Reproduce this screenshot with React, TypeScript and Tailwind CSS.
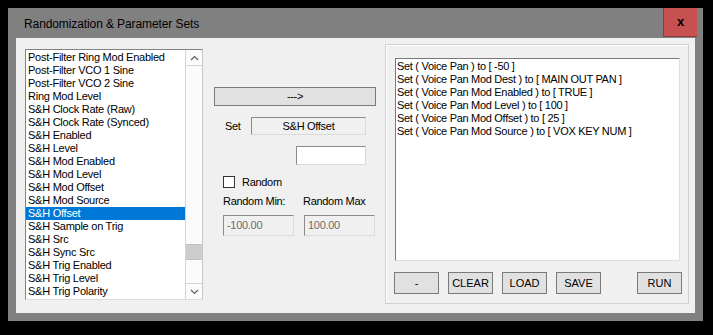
import React from 'react'

const params = [
  'Post-Filter Ring Mod Enabled',
  'Post-Filter VCO 1 Sine',
  'Post-Filter VCO 2 Sine',
  'Ring Mod Level',
  'S&H Clock Rate (Raw)',
  'S&H Clock Rate (Synced)',
  'S&H Enabled',
  'S&H Level',
  'S&H Mod Enabled',
  'S&H Mod Level',
  'S&H Mod Offset',
  'S&H Mod Source',
  'S&H Offset',
  'S&H Sample on Trig',
  'S&H Src',
  'S&H Sync Src',
  'S&H Trig Enabled',
  'S&H Trig Level',
  'S&H Trig Polarity',
]

const actions = [
  'Set ( Voice Pan ) to [ -50 ]',
  'Set ( Voice Pan Mod Dest ) to [ MAIN OUT PAN ]',
  'Set ( Voice Pan Mod Enabled ) to [ TRUE ]',
  'Set ( Voice Pan Mod Level ) to [ 100 ]',
  'Set ( Voice Pan Mod Offset ) to [ 25 ]',
  'Set ( Voice Pan Mod Source ) to [ VOX KEY NUM ]',
]

function WinButton({ label, className = '' }: { label: string; className?: string }) {
  return (
    <button className={`h-[22px] w-[45px] border border-[#7a7a7a] bg-[#e1e1e1] text-[11px] text-black leading-none ${className}`}>
      {label}
    </button>
  )
}

function ScrollBar() {
  return (
    <div className="w-[17px] flex flex-col border-l border-[#d4d4d4] bg-[#fbfbfb]">
      <div className="h-[16px] border-b border-[#d4d4d4] flex items-center justify-center">
        <svg width="9" height="6" viewBox="0 0 9 6"><polyline points="1,5 4.5,1.5 8,5" fill="none" stroke="#606060" strokeWidth="1.2" /></svg>
      </div>
      <div className="flex-1">
        <div className="mt-[178px] h-[16px] bg-[#cdcdcd] border-y border-[#c0c0c0]" />
      </div>
      <div className="h-[16px] border-t border-[#d4d4d4] flex items-center justify-center">
        <svg width="9" height="6" viewBox="0 0 9 6"><polyline points="1,1 4.5,4.5 8,1" fill="none" stroke="#606060" strokeWidth="1.2" /></svg>
      </div>
    </div>
  )
}

export default function App() {
  const sunken = 'border border-t-[#8c8c8c] border-l-[#8c8c8c] border-b-[#dadada] border-r-[#dadada]'
  return (
    <div className="w-[713px] h-[335px] bg-black pt-2 pl-2 font-['Liberation_Sans',Arial,sans-serif] text-black">
      <div className="w-[695px] h-[313px] bg-[#808080] flex flex-col">
        {/* title bar */}
        <div className="h-[30px] flex items-start pl-4 pr-[6px]">
          <span className="mt-[7px] text-[12px] tracking-[-0.1px] text-black">Randomization &amp; Parameter Sets</span>
          <div className="ml-auto w-[34px] h-[29px] bg-[#c75050] border-l border-b border-[#8e3c3c] flex items-center justify-center">
            <span className="text-[13px] font-bold leading-none -mt-[2px]">x</span>
          </div>
        </div>

        {/* client area */}
        <div className="mx-2 h-[275px] bg-[#f0f0f0] flex items-start">
          {/* parameter list */}
          <div className="ml-[9px] mt-[11px] w-[178px] h-[251px] flex border border-t-[#828282] border-l-[#828282] border-b-[#dcdcdc] border-r-[#c8c8c8] bg-white">
            <div className="flex-1 pt-[1px] overflow-hidden">
              {params.map((p) => (
                <div key={p}
                  className={`h-[13px] pl-[2px] text-[11px] leading-[13px] tracking-[-0.25px] whitespace-nowrap ${p === 'S&H Offset' ? 'bg-[#0078d7] text-white' : ''}`}>
                  {p}
                </div>
              ))}
            </div>
            <ScrollBar />
          </div>

          {/* middle controls */}
          <div className="ml-[11px] mt-[49px] w-[162px] flex flex-col text-[11px] tracking-[-0.3px]">
            <button className="h-[19px] w-full border border-[#7a7a7a] bg-[#e1e1e1] text-[11px] leading-none">---&gt;</button>

            <div className="mt-[11px] flex items-center pl-[11px]">
              <span className="w-[26px]">Set</span>
              <div className={`w-[115px] h-[18px] bg-[#f0f0f0] flex items-center justify-center ${sunken}`}>S&amp;H Offset</div>
            </div>

            <div className={`mt-[11px] ml-[82px] w-[70px] h-[19px] bg-white ${sunken}`} />

            <div className="mt-[9px] ml-[9px] flex items-center gap-[7px]">
              <div className="w-[12px] h-[12px] bg-white border border-[#333]" />
              <span>Random</span>
            </div>

            <div className="mt-[4px] ml-[9px] grid grid-cols-[80px_72px] gap-y-[7px]">
              <span className="leading-[13px]">Random Min:</span>
              <span className="leading-[13px]">Random Max</span>
              <div className={`w-[71px] h-[21px] bg-[#f0f0f0] pl-[3px] flex items-center text-[#6d6d6d] ${sunken}`}>-100.00</div>
              <div className={`ml-px w-[71px] h-[21px] bg-[#f0f0f0] pl-[3px] flex items-center text-[#6d6d6d] ${sunken}`}>100.00</div>
            </div>
          </div>

          {/* action group */}
          <div className="ml-[9px] mt-[6px] w-[304px] h-[260px] border border-[#d0d0d0] shadow-[inset_1px_1px_0_#ffffff] flex flex-col">
            <div className="ml-[9px] mt-[13px] w-[285px] h-[203px] bg-white border border-t-[#7a7a7a] border-l-[#7a7a7a] border-b-[#e0e0e0] border-r-[#e0e0e0] pt-[1px] pl-[1px]">
              {actions.map((a) => (
                <div key={a} className="h-[13px] text-[11px] leading-[13px] tracking-[-0.3px] whitespace-nowrap">{a}</div>
              ))}
            </div>
            <div className="mt-[11px] pl-[8px] pr-[6px] flex gap-[9px]">
              <WinButton label="-" />
              <WinButton label="CLEAR" />
              <WinButton label="LOAD" />
              <WinButton label="SAVE" />
              <WinButton label="RUN" className="ml-auto" />
            </div>
          </div>
        </div>
      </div>
    </div>
  )
}
